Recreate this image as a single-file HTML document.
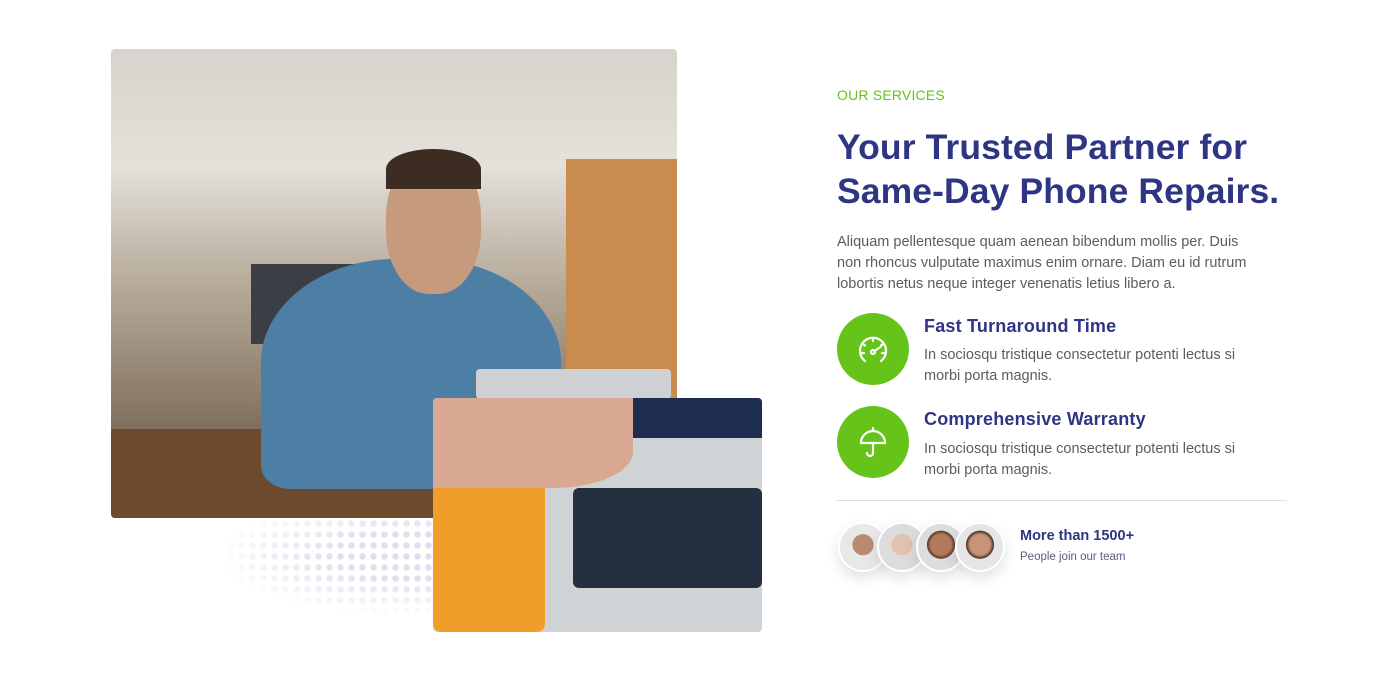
<!DOCTYPE html>
<html><head><meta charset="utf-8"><style>
*{margin:0;padding:0;box-sizing:border-box}
body{width:1394px;height:700px;background:#fff;font-family:"Liberation Sans",sans-serif;position:relative;overflow:hidden}
.p1{position:absolute;left:111px;top:49px;width:566px;height:469px;border-radius:4px;overflow:hidden;
background:linear-gradient(180deg,#d6d3cc 0%,#e4e1db 25%,#bfb5a6 45%,#8b7b68 75%,#5e4a38 100%)}
.p2{position:absolute;left:433px;top:398px;width:329px;height:234px;border-radius:4px;overflow:hidden;background:#cfd3d6}
.dots{position:absolute;left:225px;top:518px;width:210px;height:95px;
background-image:radial-gradient(circle,#dfe0ee 3px,transparent 3.5px);background-size:11px 11px;
-webkit-mask-image:radial-gradient(ellipse at 90% 40%,#000 30%,transparent 75%);mask-image:radial-gradient(ellipse at 90% 40%,#000 30%,transparent 75%)}
.tag{position:absolute;left:837px;top:87px;color:#65c31a;font-size:14px;letter-spacing:.2px}
h1{position:absolute;left:837px;top:125px;color:#2e3583;font-size:35.5px;line-height:44px;font-weight:bold;letter-spacing:.1px}
.desc{position:absolute;left:837px;top:232px;width:425px;color:#5b5b66;font-size:14.5px;line-height:21px}
.ic{position:absolute;left:837px;width:72px;height:72px;border-radius:50%;background:#65c31a}
.ic svg{position:absolute;left:18px;top:18px}
.ft{position:absolute;left:924px;color:#2e3583;font-size:18px;font-weight:bold;letter-spacing:.2px}
.fd{position:absolute;left:924px;width:350px;color:#5b5b66;font-size:14.5px;line-height:21px}
.hr{position:absolute;left:837px;top:500px;width:450px;height:1px;background:#dcdbe8}
.av{position:absolute;top:522px;width:50px;height:50px;border-radius:50%;border:2px solid #fff;box-shadow:0 6px 14px rgba(0,0,0,.12)}
</style></head><body>
<div class="dots"></div>
<div class="p1">
 <div style="position:absolute;left:455px;top:110px;width:111px;height:240px;background:#c98c4e"></div>
 <div style="position:absolute;left:140px;top:215px;width:120px;height:80px;background:#3b3e45"></div>
 <div style="position:absolute;left:0;top:380px;width:566px;height:89px;background:#6b4a2e"></div>
 <div style="position:absolute;left:150px;top:210px;width:300px;height:230px;border-radius:45% 45% 10% 10%;background:#4d7fa5"></div>
 <div style="position:absolute;left:275px;top:105px;width:95px;height:140px;border-radius:45%;background:#c69a7c"></div>
 <div style="position:absolute;left:275px;top:100px;width:95px;height:40px;border-radius:50% 50% 0 0;background:#3c2c22"></div>
 <div style="position:absolute;left:365px;top:320px;width:195px;height:30px;background:#cfd0d3;border-radius:4px"></div>
</div>
<div class="p2">
 <div style="position:absolute;left:0;top:80px;width:112px;height:154px;background:#f09d2a;border-radius:8px"></div>
 <div style="position:absolute;left:140px;top:90px;width:189px;height:100px;background:#243040;border-radius:6px"></div>
 <div style="position:absolute;left:0;top:0;width:200px;height:90px;background:#d9a892;border-radius:0 0 40% 0"></div>
 <div style="position:absolute;left:200px;top:0;width:129px;height:40px;background:#1f2c52"></div>
</div>
<div class="tag">OUR SERVICES</div>
<h1>Your Trusted Partner for<br>Same-Day Phone Repairs.</h1>
<div class="desc">Aliquam pellentesque quam aenean bibendum mollis per. Duis non rhoncus vulputate maximus enim ornare. Diam eu id rutrum lobortis netus neque integer venenatis letius libero a.</div>
<div class="ic" style="top:313px"><svg width="36" height="36" viewBox="0 0 36 36" fill="none" stroke="#fff" stroke-width="2.2" stroke-linecap="round"><path d="M10 30A13 13 0 1 1 26 30"/><path d="M18 7v3M8 13l2 1.5M28 13l-2 1.5M6 22h3M30 22h-3"/><circle cx="18" cy="21" r="2"/><path d="M19.5 20l6-4"/></svg></div>
<div class="ft" style="top:316px">Fast Turnaround Time</div>
<div class="fd" style="top:345px">In sociosqu tristique consectetur potenti lectus si morbi porta magnis.</div>
<div class="ic" style="top:406px"><svg width="36" height="36" viewBox="0 0 36 36" fill="none" stroke="#fff" stroke-width="2.2" stroke-linecap="round"><path d="M18 4v2M6 19a12 12 0 0 1 24 0z"/><path d="M18 19v10a3 3 0 0 1-6 0"/></svg></div>
<div class="ft" style="top:409px">Comprehensive Warranty</div>
<div class="fd" style="top:439px">In sociosqu tristique consectetur potenti lectus si morbi porta magnis.</div>
<div class="hr"></div>
<div class="av" style="left:838px;background:radial-gradient(circle at 50% 45%,#b98a70 30%,#e8e8e8 32%)"></div>
<div class="av" style="left:877px;background:radial-gradient(circle at 50% 45%,#e0c2ae 30%,#dcdcdc 32%)"></div>
<div class="av" style="left:916px;background:radial-gradient(circle at 50% 45%,#b47a5c 30%,#5a3a2a 40%,#ddd 42%)"></div>
<div class="av" style="left:955px;background:radial-gradient(circle at 50% 45%,#c89478 30%,#4a3022 40%,#e5e5e5 42%)"></div>
<div style="position:absolute;left:1020px;top:528px;color:#2e3583;font-size:14.5px;font-weight:bold">More than 1500+</div>
<div style="position:absolute;left:1020px;top:551px;color:#5b5b80;font-size:11.5px">People join our team</div>
</body></html>
